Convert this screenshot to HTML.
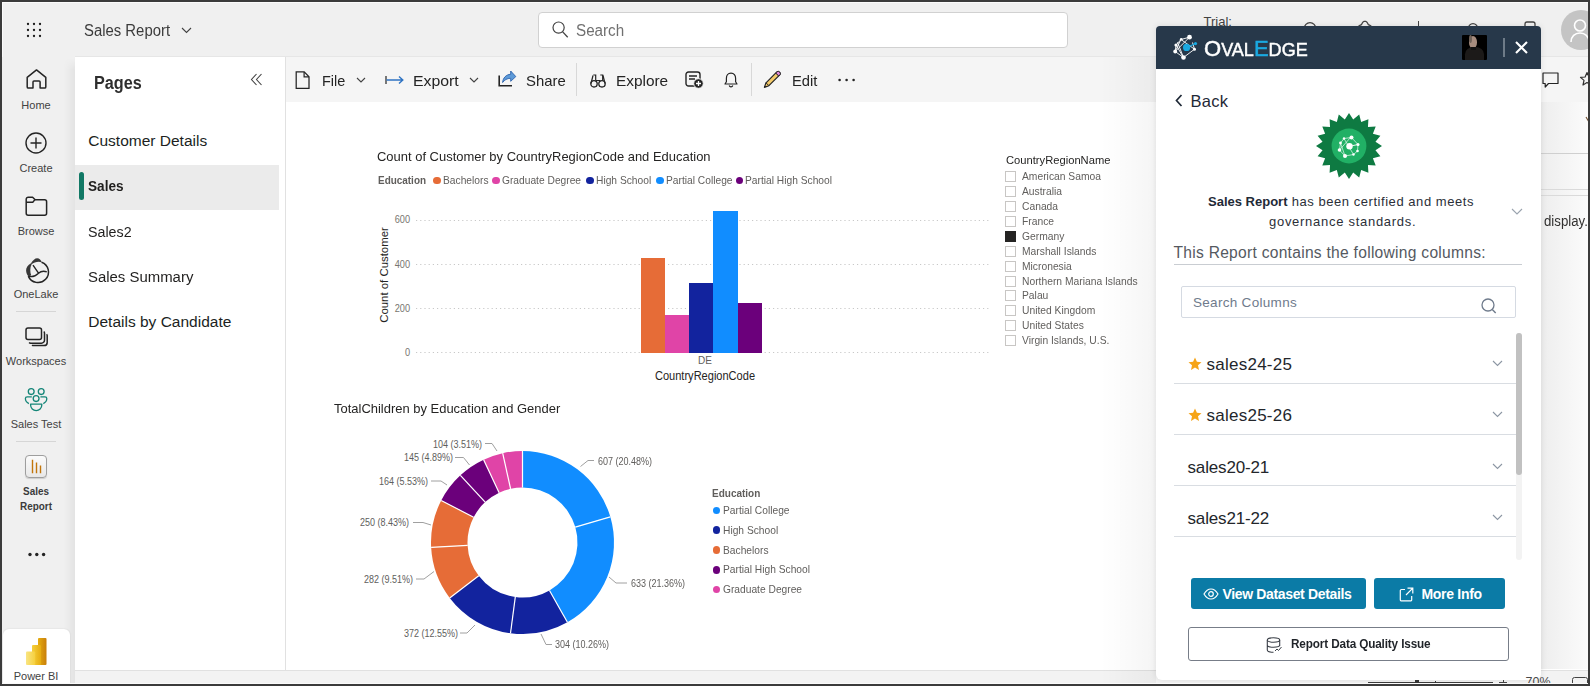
<!DOCTYPE html>
<html><head><meta charset="utf-8"><title>Sales Report</title>
<style>
*{box-sizing:border-box;margin:0;padding:0}
html,body{width:1590px;height:686px;overflow:hidden;background:#3b3b3b;font-family:"Liberation Sans",sans-serif}
.a{position:absolute}
.t{position:absolute;line-height:1;white-space:pre;font-family:"Liberation Sans",sans-serif}
svg{overflow:visible}
</style></head><body>

<div class="a" style="left:2px;top:2px;width:1586px;height:682px;background:#f0f0f0"></div>
<div class="a" style="left:2px;top:2px;width:1586px;height:1px;background:#fbfbfb"></div>
<div class="a" style="left:2px;top:2px;width:1px;height:681px;background:#fbfbfb"></div>
<svg class="a" style="left:27px;top:23px;" width="14" height="14" viewBox="0 0 14 14"><circle cx="1" cy="1" r="1.15" fill="#1b1b1b"/><circle cx="1" cy="7" r="1.15" fill="#1b1b1b"/><circle cx="1" cy="13" r="1.15" fill="#1b1b1b"/><circle cx="7" cy="1" r="1.15" fill="#1b1b1b"/><circle cx="7" cy="7" r="1.15" fill="#1b1b1b"/><circle cx="7" cy="13" r="1.15" fill="#1b1b1b"/><circle cx="13" cy="1" r="1.15" fill="#1b1b1b"/><circle cx="13" cy="7" r="1.15" fill="#1b1b1b"/><circle cx="13" cy="13" r="1.15" fill="#1b1b1b"/></svg>
<div class="t" style="left:84px;top:22.86px;font-size:16px;color:#3b3b3b;transform:scaleX(0.93);transform-origin:0 0;">Sales Report</div>
<svg class="a" style="left:181px;top:27px;" width="11" height="7" viewBox="0 0 11 7"><path d="M1 1l4.5 4.5L10 1" stroke="#424242" stroke-width="1.1" fill="none"/></svg>
<div class="a" style="left:538px;top:12px;width:530px;height:36px;background:#fff;border:1px solid #d1d1d1;border-radius:4px"></div>
<svg class="a" style="left:552px;top:21px;" width="17" height="18" viewBox="0 0 17 18"><circle cx="6.6" cy="6.6" r="5.6" stroke="#424242" stroke-width="1.2" fill="none"/><path d="M10.7 10.9l5 5.4" stroke="#424242" stroke-width="1.3" fill="none"/></svg>
<div class="t" style="left:576px;top:22.86px;font-size:16px;color:#707070;transform:scaleX(0.95);transform-origin:0 0;">Search</div>
<div class="a" style="left:75px;top:56px;width:1513px;height:1px;background:#e6e6e6"></div>
<div class="a" style="left:2px;top:57px;width:73px;height:626px;background:#f0f0f0"></div>
<div class="a" style="left:64px;top:58px;width:11px;height:625px;background:linear-gradient(90deg,rgba(0,0,0,0),rgba(0,0,0,0.05));-webkit-mask-image:linear-gradient(180deg,transparent,#000 12px)"></div>
<svg class="a" style="left:26px;top:69px;" width="21" height="21" viewBox="0 0 21 21"><path d="M1.2 8.4L10.5 0.9l9.3 7.5v9.6a1.1 1.1 0 0 1-1.1 1.1h-4.6v-6.2a1 1 0 0 0-1-1H8a1 1 0 0 0-1 1v6.2H2.3a1.1 1.1 0 0 1-1.1-1.1z" stroke="#242424" stroke-width="1.5" fill="none" stroke-linejoin="round"/></svg>
<div class="t" style="left:36px;top:99.89px;font-size:11px;color:#424242;transform:translateX(-50%);transform-origin:50% 0;">Home</div>
<svg class="a" style="left:25px;top:132px;" width="22" height="22" viewBox="0 0 22 22"><circle cx="11" cy="11" r="10" stroke="#242424" stroke-width="1.4" fill="none"/><path d="M11 5.5v11M5.5 11h11" stroke="#242424" stroke-width="1.4"/></svg>
<div class="t" style="left:36px;top:162.99px;font-size:11px;color:#424242;transform:translateX(-50%);transform-origin:50% 0;">Create</div>
<svg class="a" style="left:25px;top:196px;" width="23" height="21" viewBox="0 0 23 21"><path d="M1.2 3.2a2 2 0 0 1 2-2h4.4l2.6 2.6h9.4a2 2 0 0 1 2 2v11.4a2 2 0 0 1-2 2H3.2a2 2 0 0 1-2-2z" stroke="#242424" stroke-width="1.5" fill="none" stroke-linejoin="round"/><path d="M1.2 6.2h6.6l2-2.4" stroke="#242424" stroke-width="1.4" fill="none"/></svg>
<div class="t" style="left:36px;top:226.29px;font-size:11px;color:#424242;transform:translateX(-50%);transform-origin:50% 0;">Browse</div>
<svg class="a" style="left:22px;top:255px;" width="28" height="29" viewBox="0 0 28 29"><path d="M19.6 7.2A10.5 10.5 0 1 1 6.3 21.1" stroke="#242424" stroke-width="1.5" fill="none"/><path d="M9 8.2C10.8 5.2 13 3.2 15.2 3.2 17.4 3.2 19 5 19.9 7.4 16.5 6.2 12.5 6.9 9.4 9.6z" fill="#383838"/><path d="M9 8.2C5.8 10.2 4 12.6 4.1 15.5 4.2 18 5 20 6.5 21.2L9.3 20.6C8 17.5 7.8 12.5 9.6 9.6z" fill="#383838"/><path d="M11 10.2L16.5 18.2M6.8 21.4C10 22 13.8 21 16.5 18.2 19 16 21.8 15.8 24.8 16.8" stroke="#242424" stroke-width="1.4" fill="none"/></svg>
<div class="t" style="left:36px;top:289.29px;font-size:11px;color:#424242;transform:translateX(-50%);transform-origin:50% 0;">OneLake</div>
<div class="a" style="left:16px;top:311px;width:40px;height:1px;background:#d6d6d6"></div>
<svg class="a" style="left:25px;top:327px;" width="23" height="20" viewBox="0 0 23 20"><rect x="1" y="1" width="15.5" height="11.5" rx="2" stroke="#242424" stroke-width="1.5" fill="none"/><path d="M18.8 4.5a2 2 0 0 1 .7 1.5v7.2a3 3 0 0 1-3 3H5.6a2 2 0 0 1-1.5-.7" stroke="#242424" stroke-width="1.5" fill="none"/><path d="M21.6 7.2a2 2 0 0 1 .6 1.4v6.8a3.2 3.2 0 0 1-3.2 3.2H8.6a2 2 0 0 1-1.5-.7" stroke="#242424" stroke-width="1.5" fill="none"/></svg>
<div class="t" style="left:36px;top:355.69px;font-size:11px;color:#424242;transform:translateX(-50%);transform-origin:50% 0;">Workspaces</div>
<svg class="a" style="left:20px;top:383px;" width="32" height="32" viewBox="0 0 32 32"><g stroke="#138577" stroke-width="1.3" fill="none"><circle cx="11.2" cy="8.6" r="2.9"/><circle cx="21.2" cy="8.6" r="2.9"/><circle cx="16.1" cy="15.6" r="2.9"/><path d="M11.8 13.8H7.2a1.8 1.8 0 0 0-1.8 1.8c0 2.2 1.2 4 3.5 5"/><path d="M20.4 13.8H25a1.8 1.8 0 0 1 1.8 1.8c0 2.2-1.2 4-3.5 5"/><path d="M10.6 21.2h11.2v.8a5.6 5.6 0 0 1-11.2 0z" stroke-linejoin="round"/></g></svg>
<div class="t" style="left:36px;top:419.29px;font-size:11px;color:#424242;transform:translateX(-50%);transform-origin:50% 0;">Sales Test</div>
<div class="a" style="left:16px;top:441px;width:40px;height:1px;background:#d6d6d6"></div>
<div class="a" style="left:25px;top:455px;width:22px;height:23px;background:linear-gradient(#fbfbfb,#e8e8e8);border:1px solid #9e9e9e;border-radius:4px;box-shadow:0 1px 1px rgba(0,0,0,.15)"></div>
<svg class="a" style="left:31px;top:459px;" width="12" height="15" viewBox="0 0 12 15"><path d="M1.5 0.8v13.4M5.5 3.6v10.6M9.5 6.4v7.8" stroke="#c2760b" stroke-width="1.4"/></svg>
<div class="t" style="left:36px;top:485.99px;font-size:11px;color:#3b3b3b;font-weight:700;transform:translateX(-50%) scaleX(0.9);transform-origin:50% 0;">Sales</div>
<div class="t" style="left:36px;top:501.49px;font-size:11px;color:#3b3b3b;font-weight:700;transform:translateX(-50%) scaleX(0.9);transform-origin:50% 0;">Report</div>
<svg class="a" style="left:28px;top:552px;" width="18" height="5" viewBox="0 0 18 5"><circle cx="2" cy="2.5" r="1.7" fill="#242424"/><circle cx="8.8" cy="2.5" r="1.7" fill="#242424"/><circle cx="15.6" cy="2.5" r="1.7" fill="#242424"/></svg>
<div class="a" style="left:3px;top:629px;width:67px;height:56px;background:#fff;border-radius:6px 6px 0 0;box-shadow:0 0 2px rgba(0,0,0,.12)"></div>
<svg class="a" style="left:26px;top:638px;" width="21" height="28" viewBox="0 0 21 28"><defs><linearGradient id="pb1" x1="0" x2="1"><stop offset="0" stop-color="#e6ad10"/><stop offset="1" stop-color="#c87e0a"/></linearGradient><linearGradient id="pb2" x1="0" x2="1"><stop offset="0" stop-color="#f6d03d"/><stop offset="1" stop-color="#e6ad10"/></linearGradient><linearGradient id="pb3" x1="0" x2="1"><stop offset="0" stop-color="#f9e583"/><stop offset="1" stop-color="#f6d03d"/></linearGradient></defs><rect x="12" y="0" width="8.5" height="27" rx="1" fill="url(#pb1)"/><rect x="6" y="7" width="9" height="20" rx="1" fill="url(#pb2)"/><rect x="0" y="13.5" width="9.2" height="13.5" rx="1" fill="url(#pb3)"/></svg>
<div class="t" style="left:36px;top:670.99px;font-size:11px;color:#424242;transform:translateX(-50%);transform-origin:50% 0;">Power BI</div>
<div class="a" style="left:75px;top:57px;width:211px;height:613.5px;background:#fff"></div>
<div class="a" style="left:285px;top:57px;width:1px;height:613.5px;background:#e1e1e1"></div>
<div class="t" style="left:93.5px;top:73.66px;font-size:18px;color:#2e2e2e;font-weight:700;transform:scaleX(0.9);transform-origin:0 0;">Pages</div>
<svg class="a" style="left:250px;top:73px;" width="13" height="13" viewBox="0 0 13 13"><path d="M6.5 1L1.5 6.5l5 5.5M11.5 1L6.5 6.5l5 5.5" stroke="#424242" stroke-width="1.1" fill="none"/></svg>
<div class="t" style="left:88.3px;top:133.08px;font-size:15.5px;color:#201f1e;">Customer Details</div>
<div class="a" style="left:75px;top:165px;width:204px;height:45px;background:#ebebeb"></div>
<div class="a" style="left:79px;top:172px;width:5px;height:28px;background:#117865;border-radius:3px"></div>
<div class="t" style="left:88.3px;top:179.07px;font-size:14.8px;color:#201f1e;font-weight:700;transform:scaleX(0.92);transform-origin:0 0;">Sales</div>
<div class="t" style="left:88.3px;top:223.88px;font-size:15.5px;color:#201f1e;transform:scaleX(0.92);transform-origin:0 0;">Sales2</div>
<div class="t" style="left:88.3px;top:268.88px;font-size:15.5px;color:#201f1e;transform:scaleX(0.963);transform-origin:0 0;">Sales Summary</div>
<div class="t" style="left:88.3px;top:314.08px;font-size:15.5px;color:#201f1e;">Details by Candidate</div>
<div class="a" style="left:286px;top:57px;width:1302px;height:45px;background:#f5f5f5"></div>
<div class="a" style="left:286px;top:102px;width:1302px;height:568.5px;background:#fff"></div>
<div class="a" style="left:75px;top:670.5px;width:1513px;height:14px;background:#f3f3f3"></div>
<div class="a" style="left:75px;top:670px;width:1513px;height:1px;background:#e1e1e1"></div>
<svg class="a" style="left:295px;top:70.5px;" width="15" height="18" viewBox="0 0 15 18"><path d="M1.2 0.9h8L14 5.7v11.7H1.2z" stroke="#242424" stroke-width="1.25" fill="none"/><path d="M9.1 0.9v4.9H14" stroke="#242424" stroke-width="1.2" fill="none"/></svg>
<div class="t" style="left:321.8px;top:72.70px;font-size:15px;color:#242424;transform:scaleX(0.964);transform-origin:0 0;">File</div>
<svg class="a" style="left:356px;top:77px;" width="10" height="6" viewBox="0 0 10 6"><path d="M1 1l4 4 4-4" stroke="#424242" stroke-width="1.1" fill="none"/></svg>
<svg class="a" style="left:385px;top:75px;" width="20" height="10" viewBox="0 0 20 10"><path d="M1 1v8" stroke="#424242" stroke-width="1.4"/><path d="M1.5 5h16.5M14 1.5l3.8 3.5L14 8.5" stroke="#2f73c2" stroke-width="1.4" fill="none"/></svg>
<div class="t" style="left:413.2px;top:72.70px;font-size:15px;color:#242424;transform:scaleX(1.055);transform-origin:0 0;">Export</div>
<svg class="a" style="left:469px;top:77px;" width="10" height="6" viewBox="0 0 10 6"><path d="M1 1l4 4 4-4" stroke="#424242" stroke-width="1.1" fill="none"/></svg>
<svg class="a" style="left:498px;top:70px;" width="19" height="17" viewBox="0 0 19 17"><path d="M1.2 5.5V15.8H14" stroke="#242424" stroke-width="1.6" fill="none"/><path d="M4.6 12.5C5 8 8 4.5 12.7 4.3V1l5.1 5.6-5.1 4.7V8.3C9 8.3 6.5 10 4.6 12.5z" fill="#5d9ad8" stroke="#2b62ad" stroke-width="0.9" stroke-linejoin="round"/></svg>
<div class="t" style="left:525.8px;top:72.70px;font-size:15px;color:#242424;transform:scaleX(0.991);transform-origin:0 0;">Share</div>
<div class="a" style="left:576px;top:63px;width:1px;height:33px;background:#d8d8d8"></div>
<svg class="a" style="left:590px;top:74px;" width="16" height="14" viewBox="0 0 16 14"><path d="M3.3 1h2.4v5.5M10.3 1h2.4v5.5M5.7 6.5h4.6" stroke="#242424" stroke-width="1.2" fill="none"/><circle cx="4" cy="9.8" r="3.2" stroke="#242424" stroke-width="1.3" fill="none"/><circle cx="12" cy="9.8" r="3.2" stroke="#242424" stroke-width="1.3" fill="none"/><path d="M1 9.5L3 1.5M15 9.5L13 1.5" stroke="#242424" stroke-width="1.2"/></svg>
<div class="t" style="left:616.2px;top:72.70px;font-size:15px;color:#242424;transform:scaleX(1.026);transform-origin:0 0;">Explore</div>
<svg class="a" style="left:685px;top:71px;" width="19" height="18" viewBox="0 0 19 18"><rect x="1" y="1" width="14" height="14" rx="2.5" stroke="#242424" stroke-width="1.4" fill="none"/><path d="M4 5h8M4 8h6" stroke="#242424" stroke-width="1.3"/><circle cx="13.5" cy="12.5" r="4.8" fill="#242424" stroke="#f5f5f5" stroke-width="1"/><path d="M13.5 10v5M11 12.5h5" stroke="#fff" stroke-width="1.3"/></svg>
<svg class="a" style="left:724px;top:72px;" width="14" height="15" viewBox="0 0 14 15"><path d="M7 1.2c-3 0-4.6 2.2-4.6 5v3.6L1 12h12l-1.4-2.2V6.2c0-2.8-1.6-5-4.6-5z" stroke="#242424" stroke-width="1.2" fill="none" stroke-linejoin="round"/><path d="M5.2 13.5c.3 1 1 1.4 1.8 1.4s1.5-.4 1.8-1.4" stroke="#242424" stroke-width="1.2" fill="none"/></svg>
<div class="a" style="left:751px;top:63px;width:1px;height:33px;background:#d8d8d8"></div>
<svg class="a" style="left:763px;top:70px;" width="19" height="19" viewBox="0 0 19 19"><path d="M3 12.8L13.6 2.2a2 2 0 0 1 2.9 0 2 2 0 0 1 0 2.9L5.9 15.7 1.4 17.4z" fill="#f4ca6a" stroke="#242424" stroke-width="1.2" stroke-linejoin="round"/><path d="M13 2.8l3 3" stroke="#242424" stroke-width="1.1"/><path d="M14 1.8a2 2 0 0 1 2.7.3 2 2 0 0 1 .2 2.7l-1.2 1.2-3-3z" fill="#e48ae0" stroke="#242424" stroke-width="1"/><path d="M3 12.8l2.9 2.9" stroke="#242424" stroke-width="1"/></svg>
<div class="t" style="left:791.5px;top:72.70px;font-size:15px;color:#242424;transform:scaleX(0.983);transform-origin:0 0;">Edit</div>
<svg class="a" style="left:838px;top:78px;" width="18" height="4" viewBox="0 0 18 4"><circle cx="1.6" cy="2" r="1.3" fill="#242424"/><circle cx="8.6" cy="2" r="1.3" fill="#242424"/><circle cx="15.6" cy="2" r="1.3" fill="#242424"/></svg>
<div class="t" style="left:377px;top:150.37px;font-size:13.5px;color:#252423;transform:scaleX(0.96);transform-origin:0 0;">Count of Customer by CountryRegionCode and Education</div>
<div class="t" style="left:377.5px;top:175.19px;font-size:11px;color:#605e5c;font-weight:700;transform:scaleX(0.903);transform-origin:0 0;">Education</div>
<div class="a" style="left:433px;top:176.5px;width:7.5px;height:7.5px;background:#e66c37;border-radius:50%"></div>
<div class="t" style="left:442.5px;top:175.19px;font-size:11px;color:#605e5c;transform:scaleX(0.93);transform-origin:0 0;">Bachelors</div>
<div class="a" style="left:492px;top:176.5px;width:7.5px;height:7.5px;background:#e044a7;border-radius:50%"></div>
<div class="t" style="left:501.5px;top:175.19px;font-size:11px;color:#605e5c;transform:scaleX(0.93);transform-origin:0 0;">Graduate Degree</div>
<div class="a" style="left:586px;top:176.5px;width:7.5px;height:7.5px;background:#12239e;border-radius:50%"></div>
<div class="t" style="left:595.5px;top:175.19px;font-size:11px;color:#605e5c;transform:scaleX(0.93);transform-origin:0 0;">High School</div>
<div class="a" style="left:656px;top:176.5px;width:7.5px;height:7.5px;background:#118dff;border-radius:50%"></div>
<div class="t" style="left:665.5px;top:175.19px;font-size:11px;color:#605e5c;transform:scaleX(0.93);transform-origin:0 0;">Partial College</div>
<div class="a" style="left:735.5px;top:176.5px;width:7.5px;height:7.5px;background:#6b007b;border-radius:50%"></div>
<div class="t" style="left:745px;top:175.19px;font-size:11px;color:#605e5c;transform:scaleX(0.93);transform-origin:0 0;">Partial High School</div>
<svg class="a" style="left:416px;top:220px;" width="574" height="1" viewBox="0 0 574 1"><line x1="0" y1="0.5" x2="574" y2="0.5" stroke="#c8c8c8" stroke-width="1" stroke-dasharray="1.2 3"/></svg>
<div class="t" style="left:410px;top:215.13px;font-size:10px;color:#77756f;transform:translateX(-100%) scaleX(0.92);transform-origin:100% 0;">600</div>
<svg class="a" style="left:416px;top:264px;" width="574" height="1" viewBox="0 0 574 1"><line x1="0" y1="0.5" x2="574" y2="0.5" stroke="#c8c8c8" stroke-width="1" stroke-dasharray="1.2 3"/></svg>
<div class="t" style="left:410px;top:259.64px;font-size:10px;color:#77756f;transform:translateX(-100%) scaleX(0.92);transform-origin:100% 0;">400</div>
<svg class="a" style="left:416px;top:308px;" width="574" height="1" viewBox="0 0 574 1"><line x1="0" y1="0.5" x2="574" y2="0.5" stroke="#c8c8c8" stroke-width="1" stroke-dasharray="1.2 3"/></svg>
<div class="t" style="left:410px;top:303.64px;font-size:10px;color:#77756f;transform:translateX(-100%) scaleX(0.92);transform-origin:100% 0;">200</div>
<svg class="a" style="left:416px;top:352px;" width="574" height="1" viewBox="0 0 574 1"><line x1="0" y1="0.5" x2="574" y2="0.5" stroke="#c8c8c8" stroke-width="1" stroke-dasharray="1.2 3"/></svg>
<div class="t" style="left:410px;top:347.64px;font-size:10px;color:#77756f;transform:translateX(-100%) scaleX(0.92);transform-origin:100% 0;">0</div>
<div class="t" style="left:383.8px;top:275px;font-size:11px;color:#252423;transform:translate(-50%,-50%) rotate(-90deg) scaleX(1.035);transform-origin:50% 50%;">Count of Customer</div>
<div class="a" style="left:641px;top:258px;width:24px;height:94.5px;background:#e66c37"></div>
<div class="a" style="left:665px;top:314.5px;width:24px;height:38.0px;background:#e044a7"></div>
<div class="a" style="left:689px;top:283px;width:24px;height:69.5px;background:#12239e"></div>
<div class="a" style="left:713px;top:210.5px;width:24.5px;height:142.0px;background:#118dff"></div>
<div class="a" style="left:737.5px;top:303px;width:24.5px;height:49.5px;background:#6b007b"></div>
<div class="t" style="left:705px;top:356.34px;font-size:10px;color:#605e5c;transform:translateX(-50%);transform-origin:50% 0;">DE</div>
<div class="t" style="left:704.5px;top:370.34px;font-size:12px;color:#252423;transform:translateX(-50%) scaleX(0.92);transform-origin:50% 0;">CountryRegionCode</div>
<div class="t" style="left:1005.5px;top:154.69px;font-size:11px;color:#252423;transform:scaleX(1.017);transform-origin:0 0;">CountryRegionName</div>
<div class="a" style="left:1005px;top:171px;width:11px;height:11px;border:1px solid #c8c6c4;background:#fff"></div>
<div class="t" style="left:1022px;top:170.99px;font-size:11px;color:#605e5c;transform:scaleX(0.936);transform-origin:0 0;">American Samoa</div>
<div class="a" style="left:1005px;top:186px;width:11px;height:11px;border:1px solid #c8c6c4;background:#fff"></div>
<div class="t" style="left:1022px;top:185.92px;font-size:11px;color:#605e5c;transform:scaleX(0.936);transform-origin:0 0;">Australia</div>
<div class="a" style="left:1005px;top:201px;width:11px;height:11px;border:1px solid #c8c6c4;background:#fff"></div>
<div class="t" style="left:1022px;top:200.85px;font-size:11px;color:#605e5c;transform:scaleX(0.936);transform-origin:0 0;">Canada</div>
<div class="a" style="left:1005px;top:216px;width:11px;height:11px;border:1px solid #c8c6c4;background:#fff"></div>
<div class="t" style="left:1022px;top:215.78px;font-size:11px;color:#605e5c;transform:scaleX(0.936);transform-origin:0 0;">France</div>
<div class="a" style="left:1005px;top:231px;width:11px;height:11px;background:#252423"></div>
<div class="t" style="left:1022px;top:230.71px;font-size:11px;color:#605e5c;transform:scaleX(0.936);transform-origin:0 0;">Germany</div>
<div class="a" style="left:1005px;top:246px;width:11px;height:11px;border:1px solid #c8c6c4;background:#fff"></div>
<div class="t" style="left:1022px;top:245.64px;font-size:11px;color:#605e5c;transform:scaleX(0.936);transform-origin:0 0;">Marshall Islands</div>
<div class="a" style="left:1005px;top:261px;width:11px;height:11px;border:1px solid #c8c6c4;background:#fff"></div>
<div class="t" style="left:1022px;top:260.57px;font-size:11px;color:#605e5c;transform:scaleX(0.936);transform-origin:0 0;">Micronesia</div>
<div class="a" style="left:1005px;top:276px;width:11px;height:11px;border:1px solid #c8c6c4;background:#fff"></div>
<div class="t" style="left:1022px;top:275.50px;font-size:11px;color:#605e5c;transform:scaleX(0.936);transform-origin:0 0;">Northern Mariana Islands</div>
<div class="a" style="left:1005px;top:290px;width:11px;height:11px;border:1px solid #c8c6c4;background:#fff"></div>
<div class="t" style="left:1022px;top:290.43px;font-size:11px;color:#605e5c;transform:scaleX(0.936);transform-origin:0 0;">Palau</div>
<div class="a" style="left:1005px;top:305px;width:11px;height:11px;border:1px solid #c8c6c4;background:#fff"></div>
<div class="t" style="left:1022px;top:305.36px;font-size:11px;color:#605e5c;transform:scaleX(0.936);transform-origin:0 0;">United Kingdom</div>
<div class="a" style="left:1005px;top:320px;width:11px;height:11px;border:1px solid #c8c6c4;background:#fff"></div>
<div class="t" style="left:1022px;top:320.29px;font-size:11px;color:#605e5c;transform:scaleX(0.936);transform-origin:0 0;">United States</div>
<div class="a" style="left:1005px;top:335px;width:11px;height:11px;border:1px solid #c8c6c4;background:#fff"></div>
<div class="t" style="left:1022px;top:335.22px;font-size:11px;color:#605e5c;transform:scaleX(0.936);transform-origin:0 0;">Virgin Islands, U.S.</div>
<div class="t" style="left:333.5px;top:402.17px;font-size:13.5px;color:#252423;transform:scaleX(0.96);transform-origin:0 0;">TotalChildren by Education and Gender</div>
<svg class="a" style="left:0;top:0" width="1590" height="686" viewBox="0 0 1590 686"><path d="M522.50 451.00A91.5 91.5 0 0 1 610.33 516.86L575.30 527.09A55 55 0 0 0 522.50 487.50z" fill="#118dff"/><path d="M610.33 516.86A91.5 91.5 0 0 1 567.41 622.22L549.49 590.42A55 55 0 0 0 575.30 527.09z" fill="#118dff"/><path d="M567.41 622.22A91.5 91.5 0 0 1 510.51 633.21L515.29 597.03A55 55 0 0 0 549.49 590.42z" fill="#12239e"/><path d="M510.51 633.21A91.5 91.5 0 0 1 449.70 597.93L478.74 575.82A55 55 0 0 0 515.29 597.03z" fill="#12239e"/><path d="M449.70 597.93A91.5 91.5 0 0 1 431.13 547.35L467.58 545.41A55 55 0 0 0 478.74 575.82z" fill="#e66c37"/><path d="M431.13 547.35A91.5 91.5 0 0 1 441.21 500.49L473.64 517.25A55 55 0 0 0 467.58 545.41z" fill="#e66c37"/><path d="M441.21 500.49A91.5 91.5 0 0 1 460.39 475.31L485.16 502.11A55 55 0 0 0 473.64 517.25z" fill="#6b007b"/><path d="M460.39 475.31A91.5 91.5 0 0 1 483.63 459.67L499.13 492.71A55 55 0 0 0 485.16 502.11z" fill="#6b007b"/><path d="M483.63 459.67A91.5 91.5 0 0 1 502.68 453.17L510.59 488.81A55 55 0 0 0 499.13 492.71z" fill="#e044a7"/><path d="M502.68 453.17A91.5 91.5 0 0 1 522.50 451.00L522.50 487.50A55 55 0 0 0 510.59 488.81z" fill="#e044a7"/><line x1="522.50" y1="487.50" x2="522.50" y2="451.00" stroke="#fff" stroke-width="1.2"/><line x1="575.30" y1="527.09" x2="610.33" y2="516.86" stroke="#fff" stroke-width="1.2"/><line x1="549.49" y1="590.42" x2="567.41" y2="622.22" stroke="#fff" stroke-width="1.2"/><line x1="515.29" y1="597.03" x2="510.51" y2="633.21" stroke="#fff" stroke-width="1.2"/><line x1="478.74" y1="575.82" x2="449.70" y2="597.93" stroke="#fff" stroke-width="1.2"/><line x1="467.58" y1="545.41" x2="431.13" y2="547.35" stroke="#fff" stroke-width="1.2"/><line x1="473.64" y1="517.25" x2="441.21" y2="500.49" stroke="#fff" stroke-width="1.2"/><line x1="485.16" y1="502.11" x2="460.39" y2="475.31" stroke="#fff" stroke-width="1.2"/><line x1="499.13" y1="492.71" x2="483.63" y2="459.67" stroke="#fff" stroke-width="1.2"/><line x1="510.59" y1="488.81" x2="502.68" y2="453.17" stroke="#fff" stroke-width="1.2"/><g stroke="#a0a0a0" stroke-width="1" fill="none"><path d="M580.5 466.5L588 460.5H594"/><path d="M609 577L616 583H627"/><path d="M541 634L546 644.5H552"/><path d="M475 625L467 633H460"/><path d="M434 571.5L424 579H416"/><path d="M431 525L423 522.5H413"/><path d="M447 485L441 481H431"/><path d="M469.5 465L463.5 457.5H455"/><path d="M497 451L492 443.5H485"/></g></svg>
<div class="t" style="left:597.5px;top:456.63px;font-size:10px;color:#605e5c;transform:scaleX(0.9);transform-origin:0 0;">607 (20.48%)</div>
<div class="t" style="left:631px;top:578.74px;font-size:10px;color:#605e5c;transform:scaleX(0.9);transform-origin:0 0;">633 (21.36%)</div>
<div class="t" style="left:555px;top:640.44px;font-size:10px;color:#605e5c;transform:scaleX(0.9);transform-origin:0 0;">304 (10.26%)</div>
<div class="t" style="left:457.8px;top:628.63px;font-size:10px;color:#605e5c;transform:translateX(-100%) scaleX(0.9);transform-origin:100% 0;">372 (12.55%)</div>
<div class="t" style="left:413px;top:574.74px;font-size:10px;color:#605e5c;transform:translateX(-100%) scaleX(0.9);transform-origin:100% 0;">282 (9.51%)</div>
<div class="t" style="left:409px;top:517.63px;font-size:10px;color:#605e5c;transform:translateX(-100%) scaleX(0.9);transform-origin:100% 0;">250 (8.43%)</div>
<div class="t" style="left:428.3px;top:477.04px;font-size:10px;color:#605e5c;transform:translateX(-100%) scaleX(0.9);transform-origin:100% 0;">164 (5.53%)</div>
<div class="t" style="left:452.7px;top:453.44px;font-size:10px;color:#605e5c;transform:translateX(-100%) scaleX(0.9);transform-origin:100% 0;">145 (4.89%)</div>
<div class="t" style="left:482.2px;top:439.74px;font-size:10px;color:#605e5c;transform:translateX(-100%) scaleX(0.9);transform-origin:100% 0;">104 (3.51%)</div>
<div class="t" style="left:712.3px;top:487.69px;font-size:11px;color:#605e5c;font-weight:700;transform:scaleX(0.909);transform-origin:0 0;">Education</div>
<div class="a" style="left:712.7px;top:506.5px;width:7.6px;height:7.6px;background:#118dff;border-radius:50%"></div>
<div class="t" style="left:722.7px;top:504.99px;font-size:11px;color:#605e5c;transform:scaleX(0.93);transform-origin:0 0;">Partial College</div>
<div class="a" style="left:712.7px;top:526.33px;width:7.6px;height:7.6px;background:#12239e;border-radius:50%"></div>
<div class="t" style="left:722.7px;top:524.82px;font-size:11px;color:#605e5c;transform:scaleX(0.93);transform-origin:0 0;">High School</div>
<div class="a" style="left:712.7px;top:546.1600000000001px;width:7.6px;height:7.6px;background:#e66c37;border-radius:50%"></div>
<div class="t" style="left:722.7px;top:544.65px;font-size:11px;color:#605e5c;transform:scaleX(0.93);transform-origin:0 0;">Bachelors</div>
<div class="a" style="left:712.7px;top:565.99px;width:7.6px;height:7.6px;background:#6b007b;border-radius:50%"></div>
<div class="t" style="left:722.7px;top:564.48px;font-size:11px;color:#605e5c;transform:scaleX(0.93);transform-origin:0 0;">Partial High School</div>
<div class="a" style="left:712.7px;top:585.82px;width:7.6px;height:7.6px;background:#e044a7;border-radius:50%"></div>
<div class="t" style="left:722.7px;top:584.31px;font-size:11px;color:#605e5c;transform:scaleX(0.93);transform-origin:0 0;">Graduate Degree</div>
<div class="t" style="left:1203.5px;top:15.00px;font-size:13px;color:#424242;">Trial:</div>
<svg class="a" style="left:1303px;top:21px;" width="14" height="8" viewBox="0 0 14 8"><path d="M1.2 7.5a5.8 5.8 0 0 1 11.6 0" stroke="#424242" stroke-width="1.3" fill="none"/></svg>
<svg class="a" style="left:1356px;top:19.5px;" width="18" height="8" viewBox="0 0 18 8"><path d="M2 7.5c1-2.5 2.5-2 3.5-3 .8-1 1-3 2.5-3.2h1.8c1.5.2 1.7 2.2 2.5 3.2 1 1 2.5.5 3.5 3" stroke="#424242" stroke-width="1.3" fill="none"/></svg>
<div class="a" style="left:1417.5px;top:21px;width:1.3px;height:6px;background:#424242"></div>
<svg class="a" style="left:1467px;top:22px;" width="12" height="7" viewBox="0 0 12 7"><path d="M1.2 6.5a4.8 4.8 0 0 1 9.6 0" stroke="#424242" stroke-width="1.3" fill="none"/></svg>
<svg class="a" style="left:1523px;top:20.5px;" width="14" height="8" viewBox="0 0 14 8"><path d="M2 8V3a2 2 0 0 1 2-2h6a2 2 0 0 1 2 2V8" stroke="#424242" stroke-width="1.3" fill="none"/></svg>
<div class="a" style="left:1561px;top:9.5px;width:40px;height:40px;border-radius:50%;background:#c4c4c4"></div>
<svg class="a" style="left:1569px;top:18px;" width="22" height="26" viewBox="0 0 22 26"><circle cx="11" cy="7.5" r="5.5" stroke="#fff" stroke-width="1.6" fill="none"/><path d="M2 24c0-5.5 4-9 9-9s9 3.5 9 9" stroke="#fff" stroke-width="1.6" fill="none"/></svg>
<div class="a" style="left:1100px;top:57px;width:56px;height:626px;background:linear-gradient(90deg,rgba(0,0,0,0),rgba(0,0,0,0.04))"></div>
<svg class="a" style="left:1542px;top:72px;" width="17" height="16" viewBox="0 0 17 16"><path d="M1 1h15v10.5H6.5L3.2 15v-3.5H1z" stroke="#242424" stroke-width="1.2" fill="none" stroke-linejoin="round"/></svg>
<svg class="a" style="left:1579px;top:71px;" width="14" height="15" viewBox="0 0 14 15"><path d="M8 1.5l2 4.5 4.6.4-3.5 3 1 4.6L8 11.6 4 14l1-4.6-3.5-3 4.6-.4z" stroke="#323130" stroke-width="1.2" fill="none" stroke-linejoin="round"/></svg>
<div class="a" style="left:1540px;top:102px;width:48px;height:567px;background:linear-gradient(90deg,#ededed,#fbfbfb)"></div>
<div class="a" style="left:1540px;top:152.5px;width:48px;height:1px;background:#cfcfcf"></div>
<div class="a" style="left:1540px;top:189px;width:48px;height:1px;background:#dadada"></div>
<div class="a" style="left:1540px;top:195px;width:48px;height:1px;background:#dadada"></div>
<div class="t" style="left:1543.5px;top:214.15px;font-size:14px;color:#323130;transform:scaleX(0.945);transform-origin:0 0;">display.</div>
<svg class="a" style="left:1586px;top:116px;" width="4" height="7" viewBox="0 0 4 7"><path d="M0 1l3 5" stroke="#6b4a2a" stroke-width="1.1"/></svg>
<div class="a" style="left:1156px;top:25.5px;width:385px;height:654.5px;background:#fff;border-radius:4px 4px 6px 6px;box-shadow:0 0 6px rgba(0,0,0,.10)"></div>
<div class="a" style="left:1156px;top:25.5px;width:384.5px;height:43.8px;background:#27384a;border-radius:4px 4px 0 0"></div>
<svg class="a" style="left:1173px;top:34px;" width="25" height="27" viewBox="0 0 25 27"><g stroke="#fff" stroke-width="0.9" fill="none"><path d="M16.5 3.2L8 5.5 3 11 2.2 17.5 10.5 23.5 21.5 15.2 19.5 8.5"/><path d="M8 5.5L21.5 15.2M3 11l7.5 12.5M2.2 17.5L16.5 3.2M4.5 8.2l6 15.3M8 5.5l-5.8 12"/></g><g fill="#fff"><circle cx="16.5" cy="3.2" r="2.4"/><circle cx="8.2" cy="5.2" r="1.3"/><circle cx="3" cy="11" r="1.6"/><circle cx="2.2" cy="17.5" r="1.9"/><circle cx="10.5" cy="23.5" r="2.3"/><circle cx="21.5" cy="15.2" r="1.5"/></g><circle cx="13.6" cy="13.4" r="3.6" fill="#1aa8e0"/><path d="M13.6 13.4l8.4-3.6" stroke="#1aa8e0" stroke-width="1.1"/><circle cx="22.5" cy="9.6" r="1.6" fill="#1aa8e0"/></svg>
<div class="a" style="left:1204px;top:37.5px;height:22px;white-space:pre;line-height:22px;font-family:'Liberation Sans',sans-serif;color:#fff;-webkit-text-stroke:0.45px #fff;transform:scaleX(1.025);transform-origin:0 0"><span style="font-size:21.5px;">O</span><span style="font-size:17.6px;">VAL</span><span style="font-size:21.5px;color:#1ba9e1;-webkit-text-stroke:0.45px #1ba9e1">E</span><span style="font-size:17.6px;">DGE</span></div>
<div class="a" style="left:1462px;top:35px;width:25px;height:25px;background:#000;overflow:hidden;border-radius:1px"><div class="a" style="left:2.5px;top:12px;width:19px;height:16px;border-radius:45% 45% 0 0;background:#1c1a19"></div><div class="a" style="left:7px;top:0.5px;width:8px;height:12px;border-radius:50% 50% 45% 45%;background:#a68c7e"></div><div class="a" style="left:6.5px;top:0px;width:3px;height:8px;border-radius:50%;background:#6f6259"></div><div class="a" style="left:9px;top:11.5px;width:5px;height:3px;background:#111"></div></div>
<div class="a" style="left:1502.5px;top:38px;width:2px;height:19px;background:#6e7b88"></div>
<svg class="a" style="left:1514.5px;top:40.5px;" width="13" height="13" viewBox="0 0 13 13"><path d="M1 1l11 11M12 1L1 12" stroke="#fff" stroke-width="2.1"/></svg>
<svg class="a" style="left:1175px;top:94px;" width="8" height="13" viewBox="0 0 8 13"><path d="M6.5 1L1.5 6.5l5 5.5" stroke="#1f2937" stroke-width="1.7" fill="none"/></svg>
<div class="t" style="left:1190.5px;top:93.03px;font-size:16.5px;color:#1f2937;letter-spacing:0.3px;">Back</div>
<svg class="a" style="left:1314.5px;top:113px;" width="68" height="67" viewBox="0 0 68 67"><polygon points="34.00,0.00 38.19,6.53 44.20,1.62 46.17,9.12 53.40,6.30 52.95,14.05 60.70,13.60 57.88,20.83 65.38,22.80 60.47,28.81 67.00,33.00 60.47,37.19 65.38,43.20 57.88,45.17 60.70,52.40 52.95,51.95 53.40,59.70 46.17,56.88 44.20,64.38 38.19,59.47 34.00,66.00 29.81,59.47 23.80,64.38 21.83,56.88 14.60,59.70 15.05,51.95 7.30,52.40 10.12,45.17 2.62,43.20 7.53,37.19 1.00,33.00 7.53,28.81 2.62,22.80 10.12,20.83 7.30,13.60 15.05,14.05 14.60,6.30 21.83,9.12 23.80,1.62 29.81,6.53" fill="#0e7a42"/><circle cx="34" cy="33" r="17.4" fill="#21b065"/><g stroke="#fff" stroke-width="0.7" fill="none" opacity="0.9"><path d="M36.5 24.5L29 25.5 25.5 30 24.5 37 30 43 38.5 41.5 42.5 38 43 31.5"/><path d="M29 25.5L38.5 41.5M24.5 37l11-12.5M25.5 30L30 43M36.5 24.5L43 31.5"/></g><g fill="#fff"><circle cx="36.5" cy="24.5" r="2"/><circle cx="29" cy="25.5" r="1.2"/><circle cx="25.5" cy="30" r="1.4"/><circle cx="24.5" cy="37" r="1.8"/><circle cx="30" cy="43" r="2"/><circle cx="38.5" cy="41.5" r="1.2"/><circle cx="42.5" cy="38" r="1.3"/><circle cx="43" cy="31.5" r="1.5"/><circle cx="34.5" cy="33.3" r="3.2"/></g><path d="M34.5 33.3l8.5-1.8" stroke="#fff" stroke-width="0.9"/></svg>
<div class="t" style="left:1208px;top:194.5px;font-size:13px;color:#2b2f38;letter-spacing:0.55px"><b style="color:#1f2a37;letter-spacing:0px">Sales Report</b> has been certified and meets</div>
<div class="t" style="left:1269px;top:214.70px;font-size:13px;color:#2b2f38;letter-spacing:0.72px;">governance standards.</div>
<svg class="a" style="left:1511px;top:207.5px;" width="12" height="7" viewBox="0 0 12 7"><path d="M1 1l5 5 5-5" stroke="#9aa3ae" stroke-width="1.1" fill="none"/></svg>
<div class="t" style="left:1173.5px;top:244.99px;font-size:15.6px;color:#55595f;letter-spacing:0.27px;">This Report contains the following columns:</div>
<div class="a" style="left:1174px;top:264px;width:348px;height:1px;background:#c9cdd2"></div>
<div class="a" style="left:1181px;top:286px;width:335px;height:32px;border:1px solid #d5dae2;border-radius:2px;background:#fff"></div>
<div class="t" style="left:1193px;top:296.37px;font-size:13.5px;color:#6f7b8c;letter-spacing:0.3px;">Search Columns</div>
<svg class="a" style="left:1481px;top:298px;" width="16" height="16" viewBox="0 0 16 16"><circle cx="7" cy="7" r="6" stroke="#6f7b8c" stroke-width="1.3" fill="none"/><path d="M11.3 11.5l3.4 3.5" stroke="#6f7b8c" stroke-width="1.4"/></svg>
<div class="a" style="left:1516px;top:333px;width:6px;height:227px;background:#f3f3f3;border-radius:3px"></div>
<div class="a" style="left:1516px;top:333px;width:6px;height:142px;background:#c1c1c1;border-radius:3px"></div>
<svg class="a" style="left:1187.5px;top:356.5px;" width="14" height="13" viewBox="0 0 14 13"><path d="M7 0.5l1.9 4.3 4.6.4-3.5 3.1 1 4.6L7 10.5 3 12.9l1-4.6L0.5 5.2l4.6-.4z" fill="#f6a416"/></svg>
<div class="t" style="left:1206.5px;top:356.11px;font-size:17px;color:#23262b;letter-spacing:0.25px;">sales24-25</div>
<svg class="a" style="left:1492px;top:360.0px;" width="11" height="7" viewBox="0 0 11 7"><path d="M1 1l4.5 4.5L10 1" stroke="#8c96a3" stroke-width="1.1" fill="none"/></svg>
<div class="a" style="left:1174px;top:383px;width:342px;height:1px;background:#d9dde2"></div>
<svg class="a" style="left:1187.5px;top:407.8px;" width="14" height="13" viewBox="0 0 14 13"><path d="M7 0.5l1.9 4.3 4.6.4-3.5 3.1 1 4.6L7 10.5 3 12.9l1-4.6L0.5 5.2l4.6-.4z" fill="#f6a416"/></svg>
<div class="t" style="left:1206.5px;top:407.41px;font-size:17px;color:#23262b;letter-spacing:0.25px;">sales25-26</div>
<svg class="a" style="left:1492px;top:411.3px;" width="11" height="7" viewBox="0 0 11 7"><path d="M1 1l4.5 4.5L10 1" stroke="#8c96a3" stroke-width="1.1" fill="none"/></svg>
<div class="a" style="left:1174px;top:434.3px;width:342px;height:1px;background:#d9dde2"></div>
<div class="t" style="left:1187.5px;top:458.61px;font-size:17px;color:#23262b;letter-spacing:-0.15px;">sales20-21</div>
<svg class="a" style="left:1492px;top:462.5px;" width="11" height="7" viewBox="0 0 11 7"><path d="M1 1l4.5 4.5L10 1" stroke="#8c96a3" stroke-width="1.1" fill="none"/></svg>
<div class="a" style="left:1174px;top:485px;width:342px;height:1px;background:#d9dde2"></div>
<div class="t" style="left:1187.5px;top:509.91px;font-size:17px;color:#23262b;letter-spacing:-0.15px;">sales21-22</div>
<svg class="a" style="left:1492px;top:513.8px;" width="11" height="7" viewBox="0 0 11 7"><path d="M1 1l4.5 4.5L10 1" stroke="#8c96a3" stroke-width="1.1" fill="none"/></svg>
<div class="a" style="left:1174px;top:536px;width:342px;height:1px;background:#d9dde2"></div>
<div class="a" style="left:1191px;top:577.5px;width:175px;height:31.5px;background:#0b7ba6;border-radius:3px"></div>
<svg class="a" style="left:1203px;top:588px;" width="16" height="12" viewBox="0 0 16 12"><path d="M1 6c2-3.4 4.3-5 7-5s5 1.6 7 5c-2 3.4-4.3 5-7 5S3 9.4 1 6z" stroke="#fff" stroke-width="1.2" fill="none"/><circle cx="8" cy="6" r="2.3" stroke="#fff" stroke-width="1.2" fill="none"/></svg>
<div class="t" style="left:1222.5px;top:586.85px;font-size:14px;color:#fff;font-weight:700;letter-spacing:-0.35px;">View Dataset Details</div>
<div class="a" style="left:1374px;top:577.5px;width:131px;height:31.5px;background:#0b7ba6;border-radius:3px"></div>
<svg class="a" style="left:1398.5px;top:586.5px;" width="15" height="15" viewBox="0 0 15 15"><path d="M6 2.5H2.5a1.2 1.2 0 0 0-1.2 1.2v9a1.2 1.2 0 0 0 1.2 1.2h9a1.2 1.2 0 0 0 1.2-1.2V9" stroke="#fff" stroke-width="1.2" fill="none"/><path d="M8.5 1.2h5.3v5.3M13.8 1.2L7 8" stroke="#fff" stroke-width="1.2" fill="none"/></svg>
<div class="t" style="left:1421.5px;top:586.85px;font-size:14px;color:#fff;font-weight:700;letter-spacing:-0.3px;">More Info</div>
<div class="a" style="left:1187.5px;top:627px;width:321.5px;height:34px;border:1px solid #777d88;border-radius:3px;background:#fff"></div>
<svg class="a" style="left:1266px;top:637px;" width="17" height="17" viewBox="0 0 17 17"><ellipse cx="7.5" cy="3" rx="6.2" ry="2.2" stroke="#3a3f47" stroke-width="1.1" fill="none"/><path d="M1.3 3v10c0 1.2 2.8 2.2 6.2 2.2M13.7 3v6M1.3 8c0 1.2 2.8 2.2 6.2 2.2s6.2-1 6.2-2.2" stroke="#3a3f47" stroke-width="1.1" fill="none"/><path d="M9 14l2-2 1.5 1.5L15.5 10" stroke="#3a3f47" stroke-width="1" fill="none"/></svg>
<div class="t" style="left:1290.5px;top:637.92px;font-size:12.5px;color:#1f2328;font-weight:700;letter-spacing:-0.15px;transform:scaleX(0.94);transform-origin:0 0;">Report Data Quality Issue</div>
<div class="a" style="left:1368px;top:682.3px;width:125px;height:2px;background:#3c3c3c"></div>
<div class="a" style="left:1414.5px;top:679.5px;width:4px;height:5px;background:#333"></div>
<div class="a" style="left:1435px;top:681.2px;width:1.2px;height:3px;background:#333"></div>
<div class="a" style="left:1502.6px;top:679.6px;width:1.3px;height:5px;background:#444"></div>
<div class="a" style="left:1499px;top:682.2px;width:8px;height:1.3px;background:#444"></div>
<div class="t" style="left:1525.5px;top:676.42px;font-size:12.5px;color:#4a4a4a;">70%</div>
<div class="a" style="left:1572px;top:677.2px;width:15.5px;height:9px;border:1.3px solid #444;border-radius:2.5px"></div>
<div class="a" style="left:0px;top:0px;width:1590px;height:2px;background:#3b3b3b"></div>
<div class="a" style="left:0px;top:0px;width:2px;height:686px;background:#3b3b3b"></div>
<div class="a" style="left:0px;top:684px;width:1590px;height:2px;background:#3b3b3b"></div>
<div class="a" style="left:1588px;top:0px;width:2px;height:686px;background:#3b3b3b"></div>
<div class="a" style="left:2px;top:683px;width:1586px;height:1px;background:#fafafa"></div>
</body></html>
